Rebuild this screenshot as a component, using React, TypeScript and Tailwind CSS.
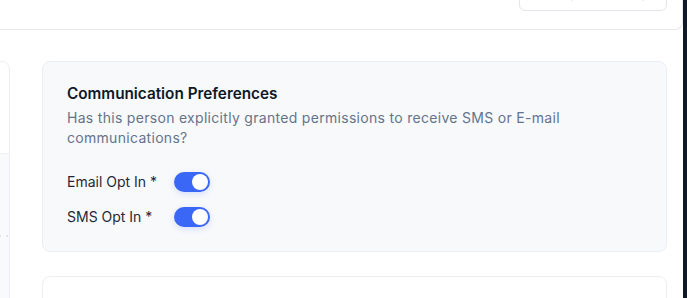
import React, { useState } from 'react';

function Toggle({ on, onChange }: { on: boolean; onChange: () => void }) {
  return (
    <button
      type="button"
      onClick={onChange}
      className={`relative h-5 w-9 rounded-full shadow-[0_2px_6px_rgba(59,103,246,0.18)] transition ${on ? 'bg-[#3b67f6]' : 'bg-gray-300'}`}
    >
      <span
        className={`absolute top-[2px] h-4 w-4 rounded-full bg-white transition ${on ? 'left-[18px]' : 'left-[2px]'}`}
      />
    </button>
  );
}

export default function App() {
  const [email, setEmail] = useState(true);
  const [sms, setSms] = useState(true);

  return (
    <div className="flex h-[298px] w-full overflow-hidden bg-white font-['Inter',sans-serif]">
      <div className="flex min-w-0 flex-1 flex-col">
        {/* header */}
        <div className="flex h-[30px] shrink-0 items-end justify-end rounded-br-lg border-b border-r border-[#e6e8ee] pr-[15px]">
          <button className="mb-[18px] flex h-[30px] w-[148px] shrink-0 items-center justify-center gap-2 whitespace-nowrap rounded-md border border-[#e2e5ec] bg-white pl-5 text-[13px] font-medium text-gray-900">
            <span className="text-gray-500">←</span>
            Back to Contacts
          </button>
        </div>

        <div className="flex flex-1 gap-8 pr-4 pt-[31px]">
          {/* left column (mostly off screen) */}
          <div className="-ml-[290px] flex w-[300px] shrink-0 flex-col overflow-hidden rounded-lg border border-[#eceef2] bg-white">
            <div className="h-[91px]" />
            <div className="flex flex-1 flex-col border-t border-[#eef0f4] bg-[#f8fafc] pt-[81px]">
              <div className="flex justify-end gap-[5px] pr-[1px]">
                <span className="h-[2px] w-[2px] rounded-full bg-[#d8dde6]" />
                <span className="h-[2px] w-[2px] rounded-full bg-[#d8dde6]" />
              </div>
            </div>
          </div>

          {/* right column */}
          <div className="flex min-w-0 flex-1 flex-col gap-6">
            <div className="rounded-lg border border-[#eceef2] bg-[#f8f9fb] px-6 pb-6 pt-5">
              <h2 className="text-[15.3px] font-semibold leading-6 text-gray-900">Communication Preferences</h2>
              <p className="mt-0.5 text-sm leading-5 tracking-[0.3px] text-[#64748b]">
                Has this person explicitly granted permissions to receive SMS or E-mail communications?
              </p>
              <div className="mt-6 flex flex-col gap-[15px]">
                <div className="flex h-5 items-center">
                  <span className="w-[107px] text-sm text-[#1f2937]">Email Opt In *</span>
                  <Toggle on={email} onChange={() => setEmail(!email)} />
                </div>
                <div className="flex h-5 items-center">
                  <span className="w-[107px] text-sm text-[#1f2937]">SMS Opt In *</span>
                  <Toggle on={sms} onChange={() => setSms(!sms)} />
                </div>
              </div>
            </div>
            <div className="h-[120px] rounded-lg border border-[#eceef2] bg-white" />
          </div>
        </div>
      </div>
      <div className="w-1 shrink-0 bg-[#111827]" />
    </div>
  );
}
